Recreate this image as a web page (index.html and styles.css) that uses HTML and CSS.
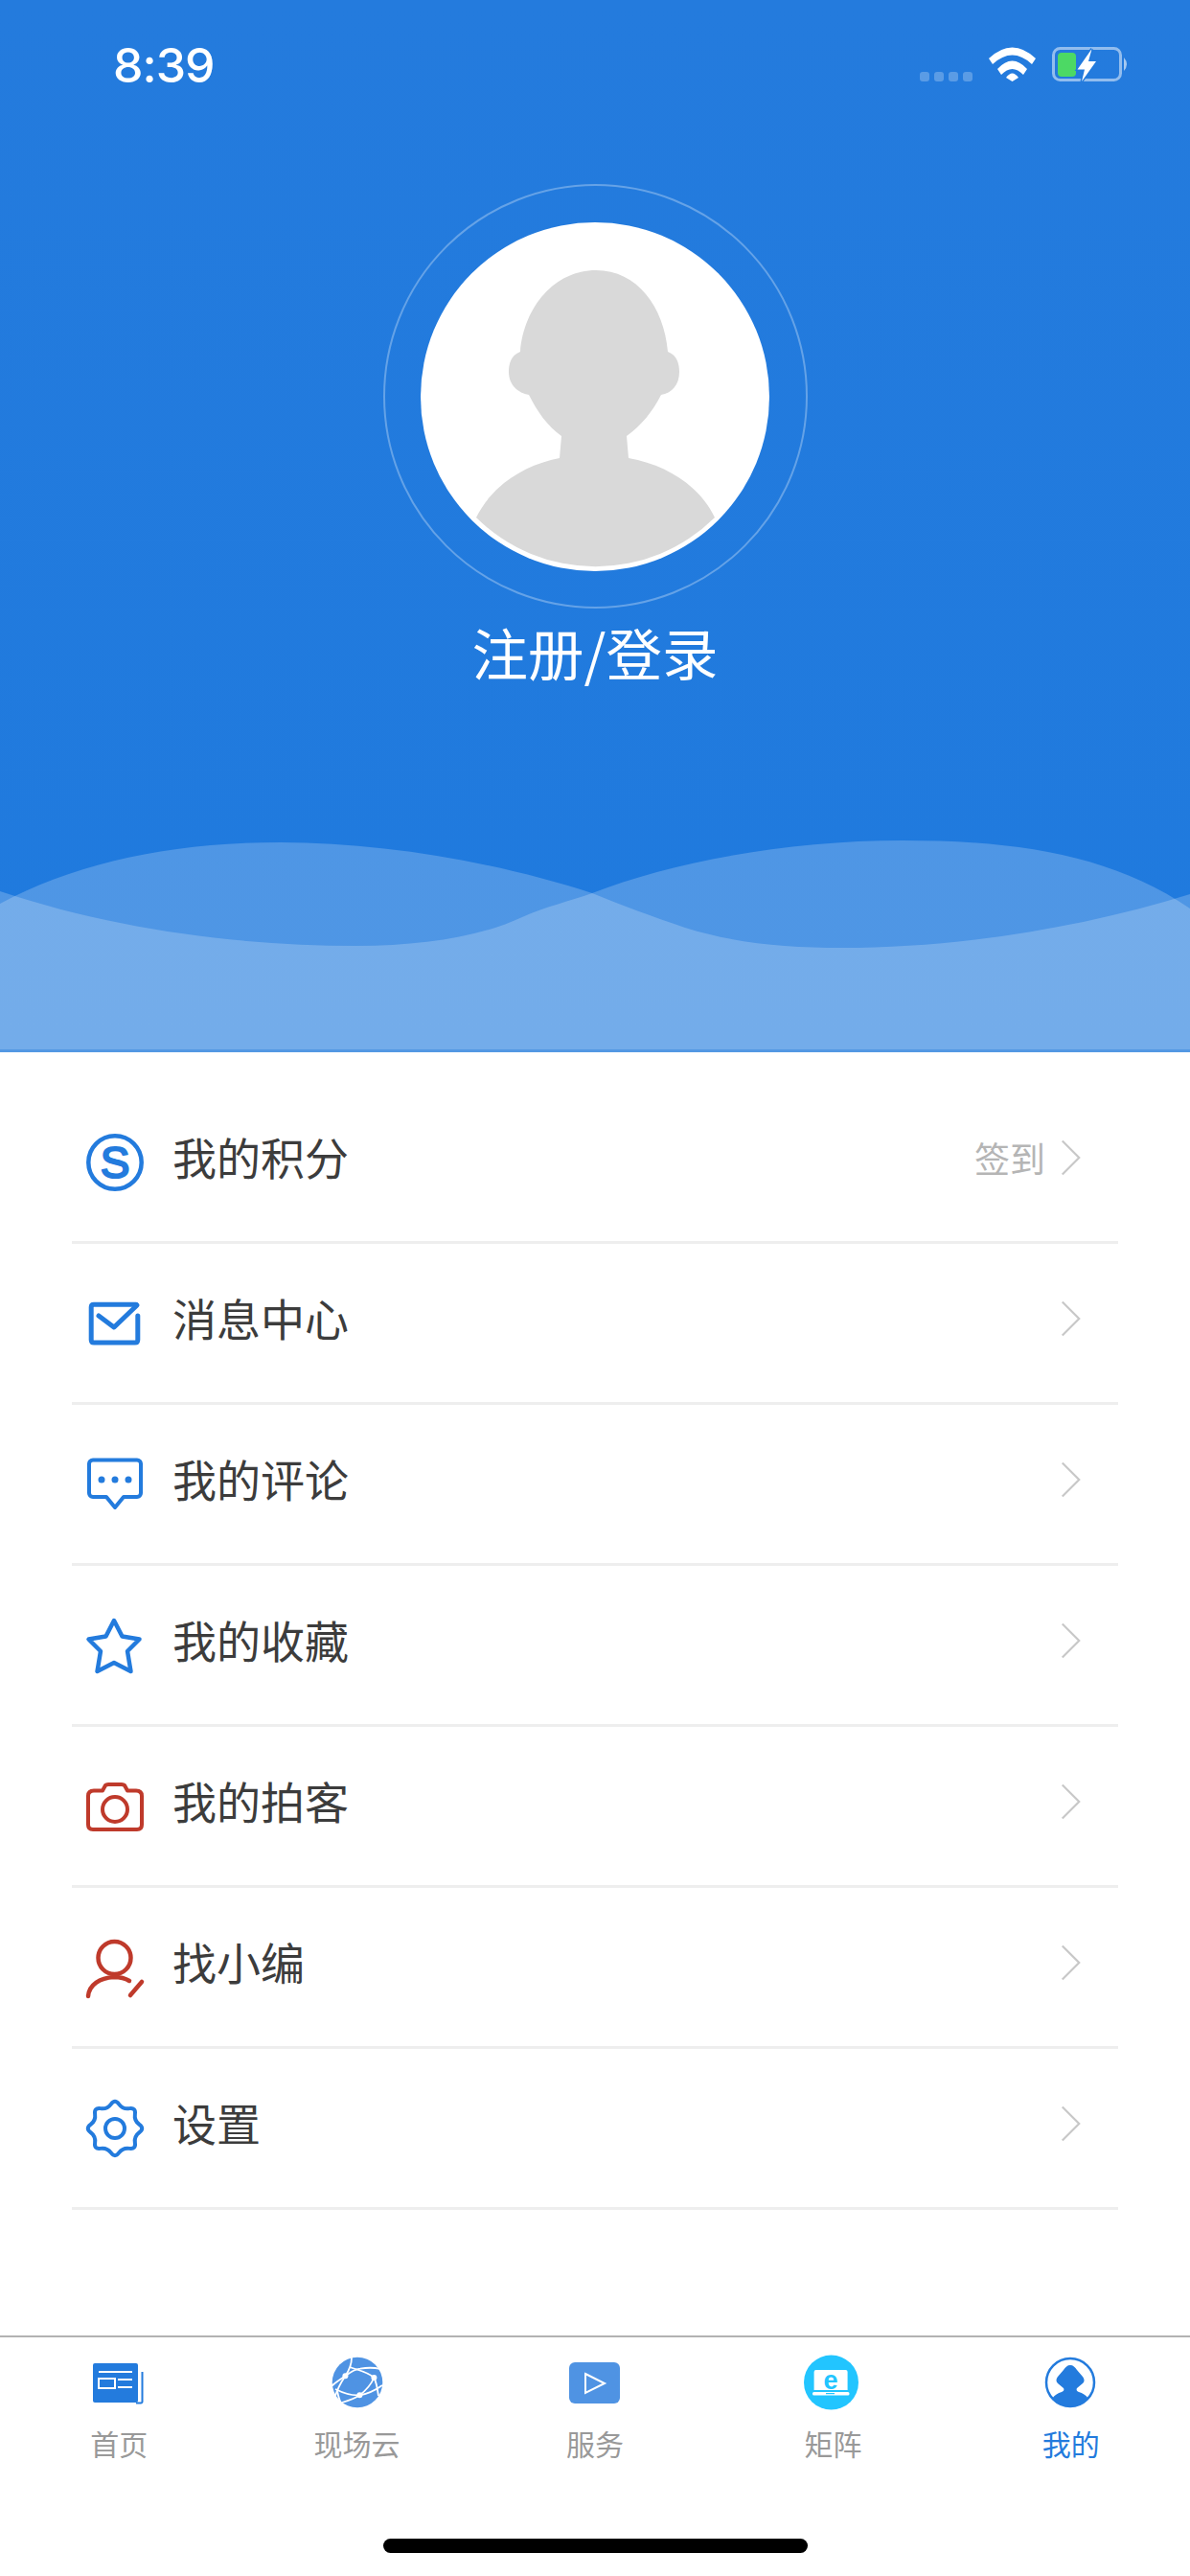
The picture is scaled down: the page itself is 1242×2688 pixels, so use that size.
FILE: index.html
```html
<!DOCTYPE html>
<html lang="zh-CN">
<head>
    <meta charset="UTF-8">
    <meta name="viewport" content="width=device-width, initial-scale=1.0">
    <title>我的</title>
    <link rel="stylesheet" href="styles.css">
</head>
<body>

<div class="page">
    <header class="hero">
        <svg class="hero-waves" viewBox="0 840 1242 255" preserveAspectRatio="none">
            <path fill="#fff" fill-opacity="0.21" d="M0 930 C120 970 250 987 372 987 C440 987 500 978 545 957 C570 946 595 940 618 932 C700 900 820 877 942 877 C1060 877 1160 892 1242 948 V1095 H0 Z"/>
            <path fill="#fff" fill-opacity="0.21" d="M0 943 C80 900 180 879 293 879 C400 879 520 900 618 932 C650 945 680 956 715 968 C770 985 820 989 879 989 C1000 989 1130 968 1242 933 V1095 H0 Z"/>
        </svg>

        <div class="status-bar">
            <span class="status-time">8:39</span>
            <svg class="status-icons" width="225" height="45" viewBox="0 0 225 45">
                <g fill="#fff" fill-opacity="0.25">
                    <rect x="5" y="30" width="10" height="10" rx="3"/>
                    <rect x="20" y="30" width="10" height="10" rx="3"/>
                    <rect x="35" y="30" width="10" height="10" rx="3"/>
                    <rect x="50" y="30" width="10" height="10" rx="3"/>
                </g>
                <g fill="#fff">
                    <path d="M77 16 Q101.5 -7 126 16 L122 22 Q101.5 3 81 22 Z"/>
                    <path d="M86 27 Q101.5 10 117 27 L113 33 Q101.5 21 90 33 Z"/>
                    <path d="M95 36 Q101.5 27 108 36 L101.5 40 Z"/>
                </g>
                <rect x="144.5" y="5.5" width="70" height="33" rx="7" fill="none" stroke="#fff" stroke-opacity="0.5" stroke-width="3"/>
                <path d="M218 15 Q224 22 218 29 Z" fill="#fff" fill-opacity="0.6"/>
                <rect x="149" y="10" width="19" height="25" rx="4" fill="#4cd964"/>
                <path d="M184.500 6 L169.500 27.500 L177 27.500 L174 40 L189 19 L181 19 Z" fill="#fff" stroke="#237bdd" stroke-width="3" paint-order="stroke"/>
            </svg>
        </div>

        <div class="avatar-ring">
            <div class="avatar">
                <svg width="364" height="364" viewBox="0 0 364 364">
                    <path fill="#d9d9d9" d="M183 50 C140 50 108 88 104 135 C94 139 92 148 92 156 C92 170 102 178 113 180 C122 198 132 212 147 223 L145 246 C108 253 74 275 58 308 A177 177 0 0 0 307 308 C291 275 257 253 217 246 L215 223 C230 212 242 198 251 180 C262 178 270 170 270 156 C270 148 268 139 258 135 C254 88 226 50 183 50 Z"/>
                </svg>
            </div>
        </div>
        <div class="login-link">注册/登录</div>
    </header>

    <ul class="menu">
        <li class="menu-row">
            <svg class="menu-icon icon-blue" viewBox="0 0 60 60">
                <circle cx="30" cy="30" r="27.7"/>
                <text class="icon-letter" x="30" y="46" font-size="46">S</text>
            </svg>
            <span class="menu-title">我的积分</span>
            <span class="menu-tag">签到</span>
            <svg class="chevron chevron-tagged" viewBox="0 0 24 44"><path d="M2 2 L22 22 L2 42"/></svg>
        </li>
        <li class="menu-row">
            <svg class="menu-icon icon-blue icon-bold" viewBox="0 0 60 60">
                <path d="M52 10.2 H8 Q5.2 10.2 5.2 13 V47 Q5.2 50 8 50 H51 Q53.8 50 53.8 47 V22"/>
                <path d="M13 22 L29 34 L53 11"/>
            </svg>
            <span class="menu-title">消息中心</span>
            <svg class="chevron" viewBox="0 0 24 44"><path d="M2 2 L22 22 L2 42"/></svg>
        </li>
        <li class="menu-row">
            <svg class="menu-icon icon-blue icon-thin" viewBox="0 0 60 60">
                <path d="M7 4.500 H53 a4 4 0 0 1 4 4 V39 a4 4 0 0 1 -4 4 H39 L30 54 L21 43 H7 a4 4 0 0 1 -4 -4 V8.500 a4 4 0 0 1 4 -4 Z"/>
                <circle class="icon-dot" cx="16" cy="25" r="3.5"/>
                <circle class="icon-dot" cx="30" cy="25" r="3.5"/>
                <circle class="icon-dot" cx="44" cy="25" r="3.5"/>
            </svg>
            <span class="menu-title">我的评论</span>
            <svg class="chevron" viewBox="0 0 24 44"><path d="M2 2 L22 22 L2 42"/></svg>
        </li>
        <li class="menu-row">
            <svg class="menu-icon icon-blue" viewBox="0 0 60 60">
                <path d="M29 4 L37.5 20.5 L55.5 23.5 L43 36 L46.5 57 L29 48 L11.5 57 L15 36 L2.5 23.5 L20.5 20.5 Z"/>
            </svg>
            <span class="menu-title">我的收藏</span>
            <svg class="chevron" viewBox="0 0 24 44"><path d="M2 2 L22 22 L2 42"/></svg>
        </li>
        <li class="menu-row">
            <svg class="menu-icon icon-red icon-thin" viewBox="0 0 60 60">
                <path d="M8 13.5 H17 L20 8 Q21 7 23 7 H37 Q39 7 40 8 L43 13.5 H52 Q58 13.5 58 19 V49 Q58 54 53 54 H7 Q2 54 2 49 V19 Q2 13.5 8 13.5 Z"/>
                <circle cx="30" cy="33" r="13"/>
            </svg>
            <span class="menu-title">我的拍客</span>
            <svg class="chevron" viewBox="0 0 24 44"><path d="M2 2 L22 22 L2 42"/></svg>
        </li>
        <li class="menu-row">
            <svg class="menu-icon icon-red" viewBox="0 0 60 60">
                <circle cx="29.5" cy="20" r="17"/>
                <path d="M2 60 C3 48 14 41 29 40 C35 40 41 41.5 45 44"/>
                <path d="M46 59 L58 45"/>
            </svg>
            <span class="menu-title">找小编</span>
            <svg class="chevron" viewBox="0 0 24 44"><path d="M2 2 L22 22 L2 42"/></svg>
        </li>
        <li class="menu-row">
            <svg class="menu-icon icon-blue icon-gear" viewBox="-30 -30 60 60">
                <path d="M-4.11 -25.43 Q0 -31 4.11 -25.43 T15.07 -20.89 T20.89 -15.07 T25.43 -4.11 T25.43 4.11 T20.89 15.07 T15.07 20.89 T4.11 25.43 T-4.11 25.43 T-15.07 20.89 T-20.89 15.07 T-25.43 4.11 T-25.43 -4.11 T-20.89 -15.07 T-15.07 -20.89 T-4.11 -25.43 Z"/>
                <circle cx="0" cy="0" r="10"/>
            </svg>
            <span class="menu-title">设置</span>
            <svg class="chevron" viewBox="0 0 24 44"><path d="M2 2 L22 22 L2 42"/></svg>
        </li>
    </ul>

    <nav class="tabbar">
        <div class="tabs">
            <div class="tab">
                <svg class="tab-icon" viewBox="0 0 60 60">
                    <rect x="3" y="10" width="47" height="41" rx="2" fill="#237bdd"/>
                    <path d="M54.5 19 V50 a1.5 1.5 0 0 1 -1.5 1.5 H48" fill="none" stroke="#237bdd" stroke-width="2"/>
                    <g fill="none" stroke="#fff" stroke-width="2">
                        <path d="M9 19 H44 M29 27 H44 M29 35 H44"/>
                        <rect x="9" y="26" width="17" height="10"/>
                    </g>
                </svg>
                <span class="tab-label">首页</span>
            </div>
            <div class="tab">
                <svg class="tab-icon" viewBox="0 0 60 60">
                    <circle cx="30" cy="30" r="26.3" fill="#4f93e3"/>
                    <g fill="none" stroke="#fff" stroke-width="1.8">
                        <path d="M24 4 C24 12 21 18 17.4 23.3 C13 30 9 37 7 44"/>
                        <path d="M3 34 C7 30 12 27 17.4 23.3 C23 19 28 16 33 15.6 C40 14.5 48 14.5 54 16"/>
                        <path d="M22 14 C30 17 41 19 47.4 25 C50 30 51 37 52 44"/>
                        <path d="M7 37 C15 41 24 44 32.4 43.3 C41 42 49 38 56 33"/>
                        <path d="M47.4 25 C44 33 38 39 32.4 43.3 C27 47 21 49 14 51"/>
                        <path d="M9 39 C10 44 11 48 13 52"/>
                    </g>
                    <g fill="#fff">
                        <circle cx="17.4" cy="23.3" r="3"/>
                        <circle cx="47.4" cy="25" r="3"/>
                        <circle cx="32.4" cy="43.3" r="3"/>
                    </g>
                </svg>
                <span class="tab-label">现场云</span>
            </div>
            <div class="tab">
                <svg class="tab-icon" viewBox="0 0 60 60">
                    <rect x="3" y="9" width="53" height="43" rx="6" fill="#4f93e3"/>
                    <path d="M20 21 L40 31 L20 41 Z" fill="none" stroke="#fff" stroke-width="2"/>
                </svg>
                <span class="tab-label">服务</span>
            </div>
            <div class="tab">
                <svg class="tab-icon" viewBox="0 0 60 60">
                    <circle cx="28.5" cy="30" r="28.5" fill="#22c5ff"/>
                    <path d="M10.6 19 a2 2 0 0 1 2 -2 H43.6 a2 2 0 0 1 2 2 V38 H10.6 Z" fill="#fff"/>
                    <rect x="9" y="40" width="38.5" height="3.4" rx="1.5" fill="#fff"/>
                    <rect x="23" y="41" width="9" height="1.2" fill="#22c5ff"/>
                    <text class="icon-e" x="28" y="36.500" font-size="27">e</text>
                </svg>
                <span class="tab-label">矩阵</span>
            </div>
            <div class="tab tab-active">
                <svg class="tab-icon" viewBox="0 0 60 60">
                    <circle cx="29" cy="30" r="25" fill="none" stroke="#237bdd" stroke-width="2.5"/>
                    <path fill="#237bdd" d="M29 12 C32 12 34 14 36 17 L42 24 C44 27 44 29 42 31 L36 36 C35 38 36 39 38 40 C42 41 45 43 48 47 A26 26 0 0 1 10 47 C13 43 16 41 20 40 C22 39 23 38 22 36 L16 31 C14 29 14 27 16 24 L22 17 C24 14 26 12 29 12 Z"/>
                </svg>
                <span class="tab-label">我的</span>
            </div>
        </div>
        <div class="home-bar"></div>
    </nav>
</div>

</body>
</html>
```

FILE: styles.css
```css
* {
    box-sizing: border-box;
}

body {
    margin: 0;
    font-family: "Noto Sans CJK SC", "Noto Sans", sans-serif;
    background-color: #fff;
}

.page {
    width: 1242px;
    height: 2688px;
    display: flex;
    flex-direction: column;
    overflow: hidden;
}

/* top blue area */
.hero {
    position: relative;
    height: 1098px;
    flex-shrink: 0;
    display: flex;
    flex-direction: column;
    align-items: center;
    background: linear-gradient(#247bdd, #1f7ade);
    border-bottom: 3px solid #5398e3;
}

.hero-waves {
    position: absolute;
    left: 0;
    bottom: 0;
    width: 1242px;
    height: 255px;
}

.status-bar {
    width: 100%;
    height: 192px;
    padding: 43px 62px 0 118px;
    display: flex;
    justify-content: space-between;
    align-items: flex-start;
    color: #fff;
}

.status-time {
    font-family: Inter, "Liberation Sans", sans-serif;
    font-size: 50px;
    font-weight: 500;
    line-height: 50px;
    letter-spacing: -1px;
}

.status-icons {
    margin-top: 2px;
}

.avatar-ring {
    width: 443px;
    height: 443px;
    flex-shrink: 0;
    display: flex;
    align-items: center;
    justify-content: center;
    border: 2px solid rgba(255, 255, 255, 0.3);
    border-radius: 50%;
}

.avatar {
    width: 364px;
    height: 364px;
    border-radius: 50%;
    background-color: #fff;
}

.avatar svg {
    display: block;
}

.login-link {
    margin-top: 10px;
    font-size: 58.5px;
    line-height: 70px;
    color: #fff;
}

/* menu list */
.menu {
    list-style: none;
    margin: 32px 75px 0;
    padding: 0;
}

.menu-row {
    height: 168px;
    padding: 0 39px 0 15px;
    display: flex;
    align-items: center;
    border-bottom: 3px solid #eee;
}

.menu-icon {
    width: 60px;
    height: 60px;
    flex-shrink: 0;
    overflow: visible;
    fill: none;
    stroke-width: 4.5px;
    stroke-linejoin: round;
    stroke-linecap: round;
}

.icon-blue {
    stroke: #237bdd;
}

.icon-red {
    stroke: #bf3a2b;
}

.icon-thin {
    stroke-width: 4px;
}

.icon-bold {
    stroke-width: 5px;
}

.icon-gear {
    stroke-width: 4px;
}

.icon-dot {
    fill: #237bdd;
    stroke: none;
}

.icon-letter {
    font-family: "Liberation Sans", sans-serif;
    text-anchor: middle;
    fill: #237bdd;
    stroke-width: 2.2px;
}

.menu-title {
    flex: 1;
    margin-left: 30px;
    margin-bottom: 13px;
    font-size: 46px;
    color: #3c3c3c;
}

.menu-tag {
    margin-bottom: 10px;
    font-size: 37px;
    color: #b5b5b5;
}

.chevron {
    width: 21px;
    height: 40px;
    margin-bottom: 10px;
    fill: none;
    stroke: #c8c8c8;
    stroke-width: 2.5px;
}

.chevron-tagged {
    margin-left: 16px;
}

/* bottom tabs */
.tabbar {
    margin-top: auto;
    height: 251px;
    padding-bottom: 24px;
    display: flex;
    flex-direction: column;
    align-items: center;
    border-top: 2px solid #b2b2b2;
}

.tabs {
    width: 100%;
    padding-top: 17px;
    display: flex;
}

.tab {
    flex: 1;
    display: flex;
    flex-direction: column;
    align-items: center;
    color: #999;
}

.tab-active {
    color: #237bdd;
}

.tab-icon {
    width: 60px;
    height: 60px;
}

.icon-e {
    font-family: "Liberation Sans", sans-serif;
    font-weight: 700;
    text-anchor: middle;
    fill: #22c5ff;
}

.tab-label {
    margin-top: 11px;
    font-size: 30px;
    line-height: 44px;
}

.home-bar {
    width: 443px;
    height: 15px;
    margin-top: auto;
    border-radius: 8px;
    background-color: #000;
}
```
